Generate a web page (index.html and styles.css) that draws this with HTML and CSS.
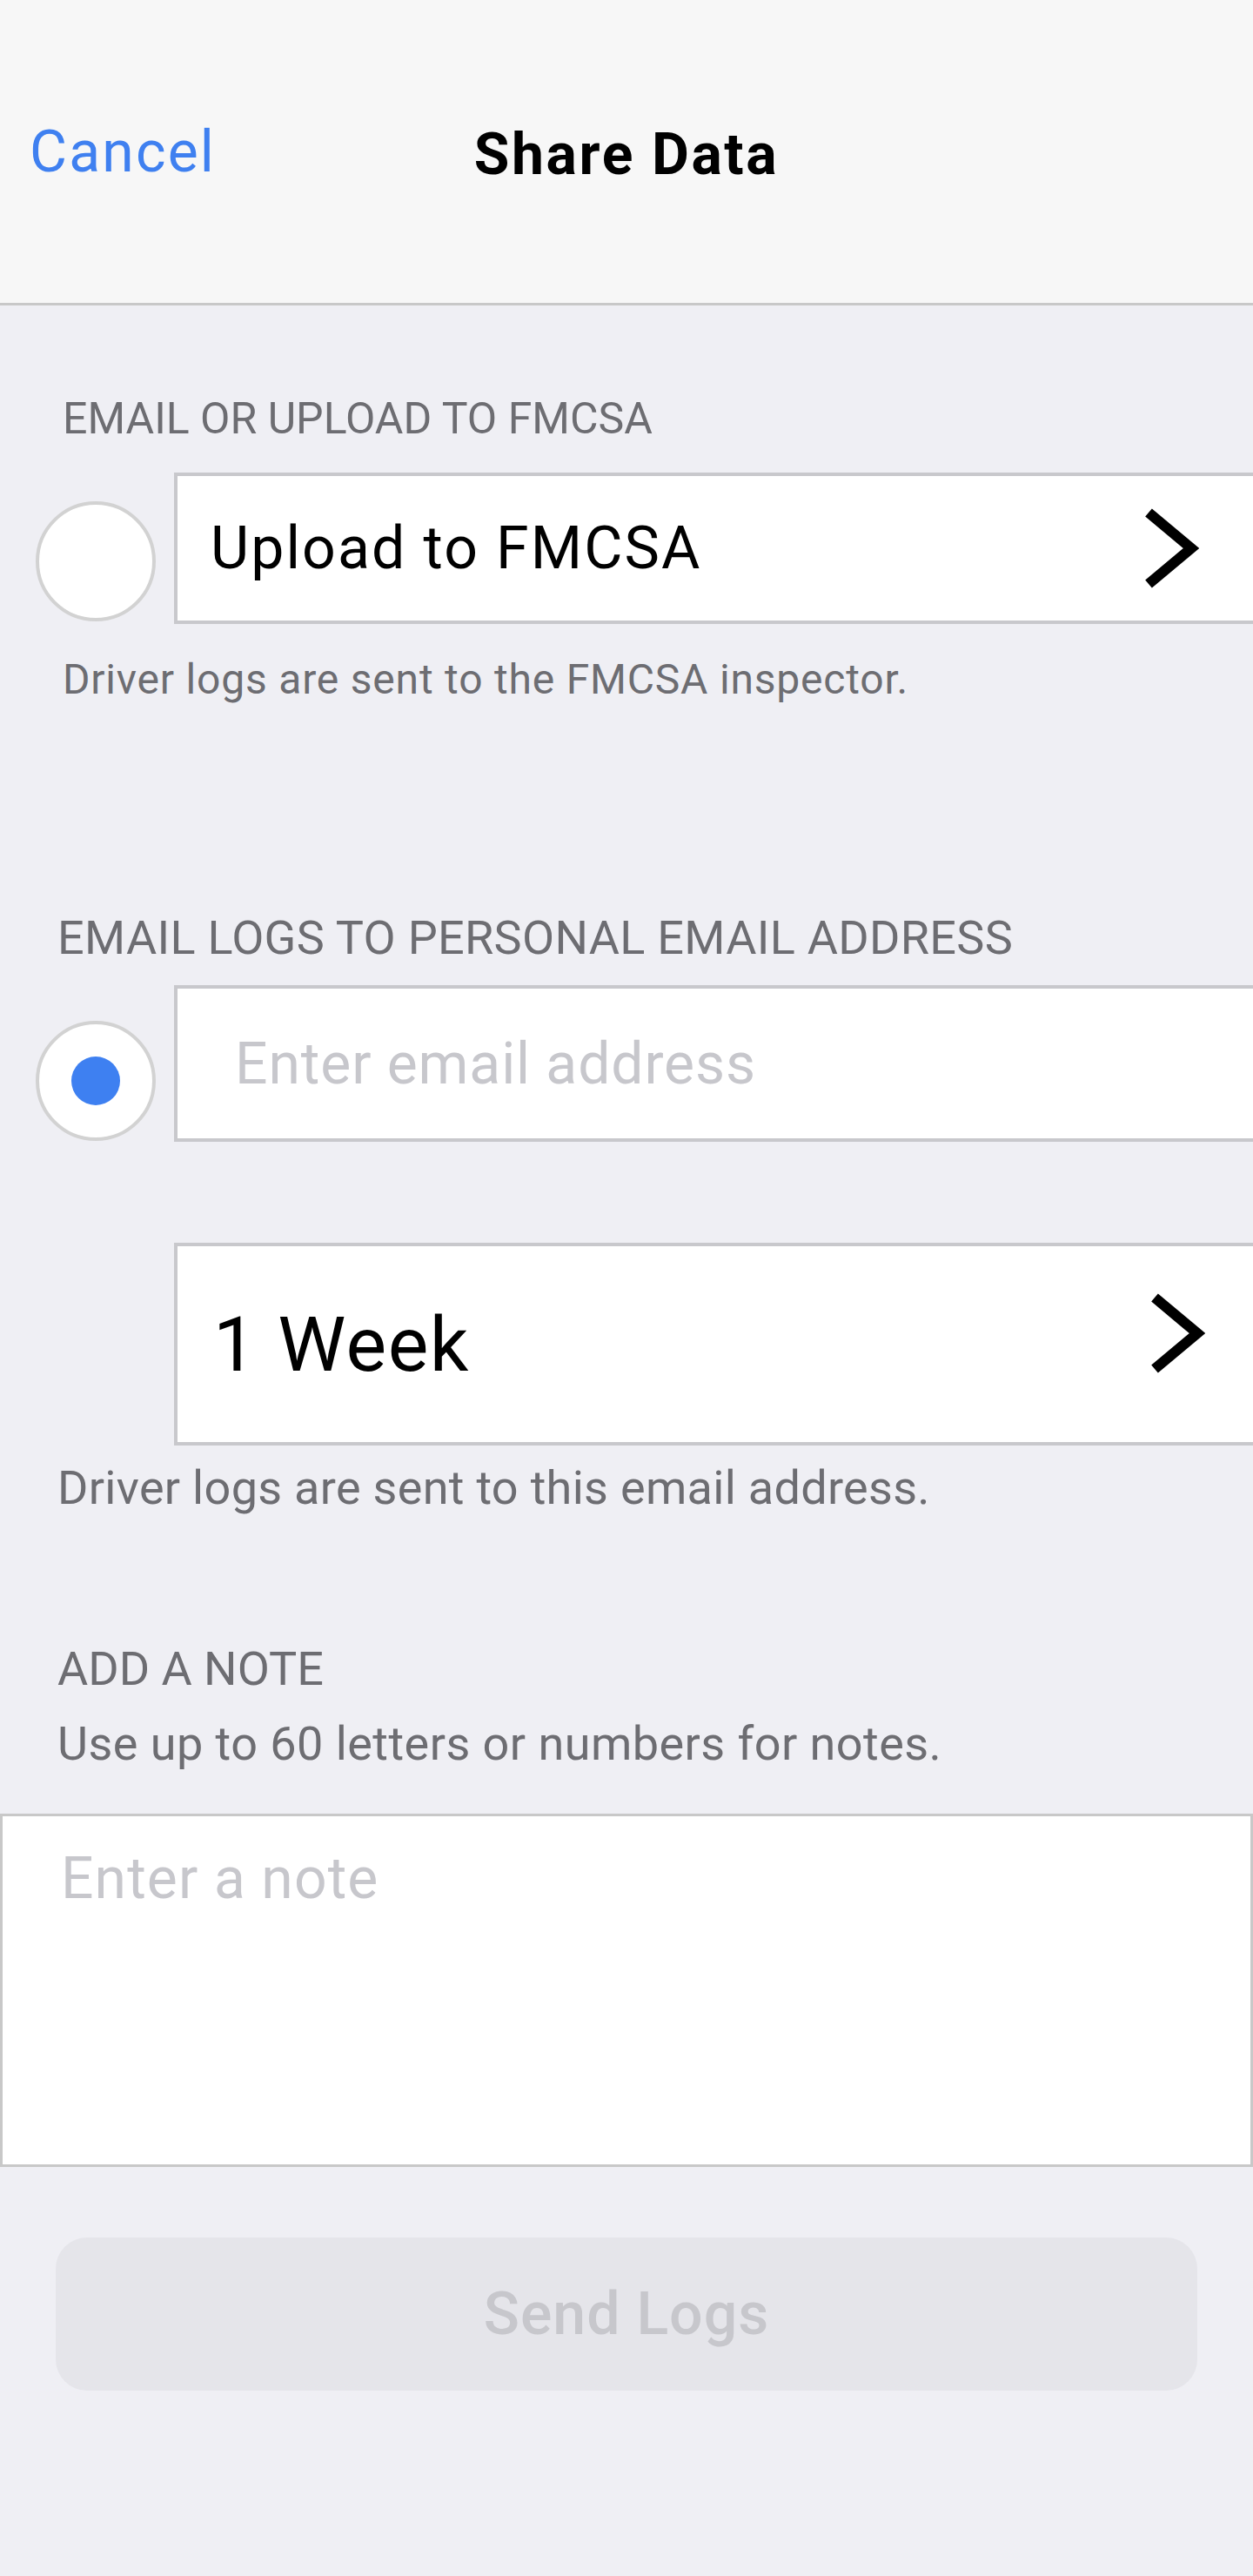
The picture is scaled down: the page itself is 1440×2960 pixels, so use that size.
FILE: index.html
```html
<!DOCTYPE html>
<html lang="en">
<head>
<meta charset="utf-8">
<title>Share Data</title>
<link rel="stylesheet" href="styles.css">
</head>
<body>
<div class="screen">
  <header class="navbar">
    <a class="nav-cancel">Cancel</a>
    <h1 class="nav-title">Share Data</h1>
    <span class="nav-spacer"></span>
  </header>

  <main class="content">
    <section class="section section-fmcsa">
      <h2 class="section-label label-first">EMAIL OR UPLOAD TO FMCSA</h2>
      <div class="option-row">
        <span class="radio radio-first"></span>
        <div class="field field-upload">
          <span class="field-text">Upload to FMCSA</span>
          <svg class="chevron" viewBox="0 0 64 92" width="64" height="92" aria-hidden="true"><polyline points="6,5 55,46 6,87" fill="none" stroke="#000" stroke-width="12" stroke-linejoin="miter" stroke-miterlimit="10"/></svg>
        </div>
      </div>
      <p class="helper helper-first">Driver logs are sent to the FMCSA inspector.</p>
    </section>

    <section class="section section-email">
      <h2 class="section-label label-email">EMAIL LOGS TO PERSONAL EMAIL ADDRESS</h2>
      <div class="option-row">
        <span class="radio radio-second radio-on"><span class="radio-dot"></span></span>
        <div class="field field-email">
          <span class="placeholder placeholder-email">Enter email address</span>
        </div>
      </div>
      <div class="option-row range-row">
        <span class="radio-spacer"></span>
        <div class="field field-range">
          <span class="range-text">1 Week</span>
          <svg class="chevron chevron-range" viewBox="0 0 64 92" width="64" height="92" aria-hidden="true"><polyline points="6,5 55,46 6,87" fill="none" stroke="#000" stroke-width="12" stroke-linejoin="miter" stroke-miterlimit="10"/></svg>
        </div>
      </div>
      <p class="helper helper-large helper-email">Driver logs are sent to this email address.</p>
    </section>

    <section class="section section-note">
      <h2 class="section-label label-note">ADD A NOTE</h2>
      <p class="helper helper-large helper-note">Use up to 60 letters or numbers for notes.</p>
      <div class="note-box">
        <span class="placeholder placeholder-note">Enter a note</span>
      </div>
    </section>

    <div class="button-wrap">
      <button class="send-button" type="button" disabled>Send Logs</button>
    </div>
  </main>
</div>
</body>
</html>
```
FILE: styles.css
```css
* { box-sizing: border-box; }

html, body {
  margin: 0;
  padding: 0;
}

body {
  background: #efeff4;
  font-family: Roboto, "Liberation Sans", Arial, sans-serif;
  color: #000;
  width: 1440px;
  min-height: 2960px;
  overflow-x: hidden;
}

.screen {
  width: 1440px;
  min-height: 2960px;
  display: flex;
  flex-direction: column;
}

/* Navigation bar */
.navbar {
  height: 351px;
  background: #f7f7f7;
  border-bottom: 3px solid #c8c8c8;
  display: grid;
  grid-template-columns: 1fr auto 1fr;
  align-items: center;
  padding: 6px 34px 0 34px;
}

.nav-cancel {
  color: #3f80f0;
  font-size: 66px;
  font-weight: 400;
  letter-spacing: 2.2px;
  justify-self: start;
  margin-top: -6px;
}

.nav-title {
  margin: 0;
  font-size: 66px;
  font-weight: 700;
  color: #000;
  letter-spacing: 2.6px;
}

/* Content */
.content {
  display: flex;
  flex-direction: column;
}

.section {
  display: flex;
  flex-direction: column;
}

.section-label {
  margin: 0;
  padding-left: 66px;
  font-size: 50px;
  line-height: 56px;
  font-weight: 400;
  color: #6d6d72;
}

.label-first {
  margin-top: 102px;
  padding-left: 72px;
}

.label-email {
  margin-top: 240px;
  font-size: 54px;
  letter-spacing: 0.3px;
}

.option-row {
  display: flex;
  align-items: flex-start;
  padding-left: 41px;
  gap: 21px;
  margin-top: 34px;
}

.section-email .option-row {
  margin-top: 26px;
}

.section-email .range-row {
  margin-top: 116px;
}

.radio {
  flex: 0 0 138px;
  width: 138px;
  height: 138px;
  border-radius: 50%;
  background: #fff;
  border: 4px solid #d2d2d2;
  display: flex;
  align-items: center;
  justify-content: center;
}

.radio-first { margin-top: 33px; }
.radio-second { margin-top: 41px; }

.radio-dot {
  width: 56px;
  height: 56px;
  border-radius: 50%;
  background: #3e80f1;
}

.radio-spacer {
  flex: 0 0 138px;
}

.field {
  flex: 1;
  background: #fff;
  border: 4px solid #c8c8cc;
  border-right: none;
  display: flex;
  align-items: center;
  justify-content: space-between;
}

.field-upload {
  height: 174px;
  padding: 0 62px 0 38px;
}

.field-text {
  font-size: 68px;
  color: #000;
  letter-spacing: 2.1px;
}

.field-email {
  height: 180px;
  padding-left: 66px;
}

.placeholder {
  color: #c7c7cc;
  font-size: 66px;
}

.placeholder-email {
  letter-spacing: 0.9px;
}

.field-range {
  height: 233px;
  padding: 0 55px 0 41px;
}

.range-text {
  font-size: 88px;
  color: #000;
  letter-spacing: 1.5px;
}

.chevron {
  display: block;
  flex: 0 0 auto;
}

.chevron-range {
  margin-bottom: 26px;
}

.helper {
  margin: 0;
  color: #6d6d72;
}

.helper-first {
  margin-top: 35px;
  padding-left: 72px;
  font-size: 48px;
  line-height: 58px;
  letter-spacing: 0.8px;
}

.helper-large {
  margin-top: 17px;
  padding-left: 66px;
  font-size: 54px;
  line-height: 64px;
}

.helper-email {
  letter-spacing: 0.3px;
}

.label-note {
  margin-top: 146px;
  font-size: 54px;
  line-height: 60px;
}

.helper-note {
  margin-top: 24px;
  letter-spacing: 0.45px;
}

.note-box {
  margin-top: 48px;
  height: 406px;
  background: #fff;
  border: 3px solid #c8c8c8;
  padding: 32px 0 0 67px;
}

.placeholder-note {
  display: block;
  line-height: 80px;
  letter-spacing: 1.1px;
}

.button-wrap {
  padding: 81px 64px 0 64px;
}

.send-button {
  width: 100%;
  height: 176px;
  border: none;
  border-radius: 36px;
  background: #e5e5ea;
  color: #c7c7cc;
  font-family: Roboto, "Liberation Sans", Arial, sans-serif;
  font-size: 68px;
  font-weight: 500;
  letter-spacing: 1px;
  display: flex;
  align-items: center;
  justify-content: center;
}
```
